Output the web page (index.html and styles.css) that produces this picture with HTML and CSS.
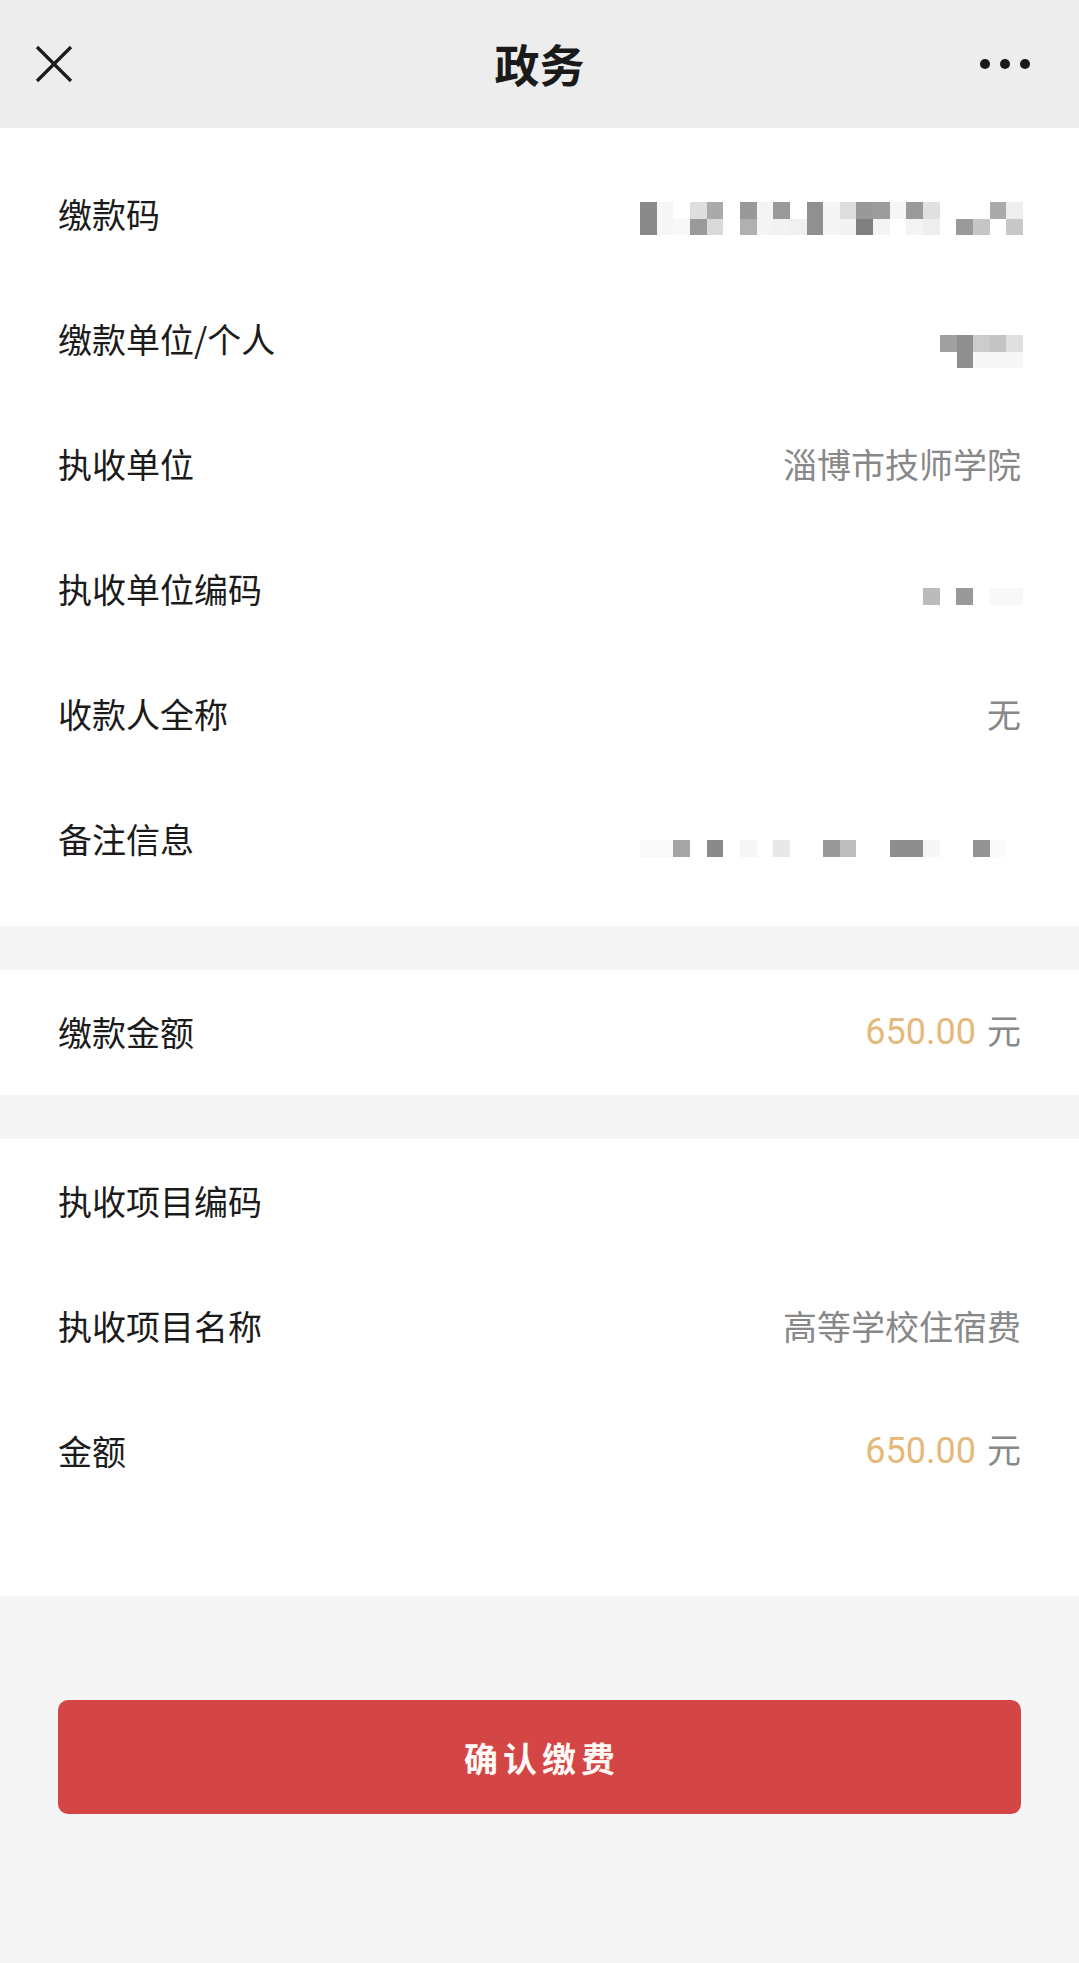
FILE: index.html
```html
<!DOCTYPE html>
<html lang="zh-CN">
<head>
	<meta charset="UTF-8">
	<title>政务</title>
<link rel="stylesheet" href="styles.css">
</head>
<body>
	<div id="page">
		<div class="topbar">
			<svg class="close" width="38" height="38" viewBox="0 0 38 38">
				<path d="M2 2 L36 36 M36 2 L2 36" stroke="#1a1a1a" stroke-width="3.2" fill="none"/>
			</svg>
			<div class="title">政务</div>
			<svg class="more" width="64" height="20" viewBox="0 0 64 20">
				<circle cx="5" cy="10" r="5" fill="#1a1a1a"/>
				<circle cx="25" cy="10" r="5" fill="#1a1a1a"/>
				<circle cx="45" cy="10" r="5" fill="#1a1a1a"/>
			</svg>
		</div>

		<div class="group group-info">
			<div class="row">
				<span class="label">缴款码</span>
				<svg class="mask mask-code" width="383" height="33" viewBox="0 0 23 2" preserveAspectRatio="none" shape-rendering="crispEdges">
					<rect x="0" y="0" width="1" height="2" fill="#8a8a8a"/>
					<rect x="1" y="0" width="1" height="2" fill="#f6f6f6"/>
					<rect x="2" y="1" width="1" height="1" fill="#f8f8f8"/>
					<rect x="3" y="0" width="1" height="1" fill="#dedede"/>
					<rect x="3" y="1" width="1" height="1" fill="#9a9a9a"/>
					<rect x="4" y="0" width="1" height="1" fill="#aaaaaa"/>
					<rect x="4" y="1" width="1" height="1" fill="#dadada"/>
					<rect x="6" y="0" width="1" height="1" fill="#999999"/>
					<rect x="6" y="1" width="1" height="1" fill="#b0b0b0"/>
					<rect x="7" y="0" width="1" height="2" fill="#f4f4f4"/>
					<rect x="8" y="0" width="1" height="1" fill="#9a9a9a"/>
					<rect x="8" y="1" width="1" height="1" fill="#f2f2f2"/>
					<rect x="9" y="1" width="1" height="1" fill="#f0f0f0"/>
					<rect x="10" y="0" width="1" height="2" fill="#909090"/>
					<rect x="11" y="0" width="1" height="2" fill="#f5f5f5"/>
					<rect x="12" y="0" width="1" height="1" fill="#dddddd"/>
					<rect x="12" y="1" width="1" height="1" fill="#f3f3f3"/>
					<rect x="13" y="0" width="1" height="1" fill="#999999"/>
					<rect x="13" y="1" width="1" height="1" fill="#808080"/>
					<rect x="14" y="0" width="1" height="1" fill="#9c9c9c"/>
					<rect x="14" y="1" width="1" height="1" fill="#f4f4f4"/>
					<rect x="15" y="0" width="1" height="1" fill="#f6f6f6"/>
					<rect x="16" y="0" width="1" height="1" fill="#9a9a9a"/>
					<rect x="16" y="1" width="1" height="1" fill="#f4f4f4"/>
					<rect x="17" y="0" width="1" height="1" fill="#e0e0e0"/>
					<rect x="17" y="1" width="1" height="1" fill="#eeeeee"/>
					<rect x="19" y="1" width="1" height="1" fill="#9a9a9a"/>
					<rect x="20" y="1" width="1" height="1" fill="#c6c6c6"/>
					<rect x="21" y="0" width="1" height="1" fill="#aaaaaa"/>
					<rect x="22" y="0" width="1" height="1" fill="#eeeeee"/>
					<rect x="22" y="1" width="1" height="1" fill="#c8c8c8"/>
				</svg>
			</div>
			<div class="row">
				<span class="label">缴款单位/个人</span>
				<svg class="mask mask-payer" width="83" height="33" viewBox="0 0 5 2" preserveAspectRatio="none" shape-rendering="crispEdges">
					<rect x="0" y="0" width="1" height="1" fill="#a0a0a0"/>
					<rect x="1" y="0" width="1" height="2" fill="#8f8f8f"/>
					<rect x="2" y="0" width="1" height="1" fill="#cccccc"/>
					<rect x="3" y="0" width="1" height="1" fill="#c4c4c4"/>
					<rect x="4" y="0" width="1" height="1" fill="#e0e0e0"/>
					<rect x="2" y="1" width="3" height="1" fill="#f7f7f7"/>
				</svg>
			</div>
			<div class="row">
				<span class="label">执收单位</span>
				<span class="value">淄博市技师学院</span>
			</div>
			<div class="row">
				<span class="label">执收单位编码</span>
				<svg class="mask mask-unit" width="100" height="17" viewBox="0 0 6 1" preserveAspectRatio="none" shape-rendering="crispEdges">
					<rect x="0" y="0" width="1" height="1" fill="#bbbbbb"/>
					<rect x="2" y="0" width="1" height="1" fill="#999999"/>
					<rect x="4" y="0" width="2" height="1" fill="#f8f8f8"/>
				</svg>
			</div>
			<div class="row">
				<span class="label">收款人全称</span>
				<span class="value">无</span>
			</div>
			<div class="row">
				<span class="label">备注信息</span>
				<svg class="mask mask-note" width="383" height="17" viewBox="0 0 23 1" preserveAspectRatio="none" shape-rendering="crispEdges">
					<rect x="0" y="0" width="2" height="1" fill="#f9f9f9"/>
					<rect x="2" y="0" width="1" height="1" fill="#a5a5a5"/>
					<rect x="4" y="0" width="1" height="1" fill="#8a8a8a"/>
					<rect x="6" y="0" width="1" height="1" fill="#f6f6f6"/>
					<rect x="8" y="0" width="1" height="1" fill="#e8e8e8"/>
					<rect x="11" y="0" width="1" height="1" fill="#999999"/>
					<rect x="12" y="0" width="1" height="1" fill="#bdbdbd"/>
					<rect x="15" y="0" width="2" height="1" fill="#8e8e8e"/>
					<rect x="17" y="0" width="1" height="1" fill="#f7f7f7"/>
					<rect x="20" y="0" width="1" height="1" fill="#939393"/>
					<rect x="21" y="0" width="1" height="1" fill="#fafafa"/>
				</svg>
			</div>
		</div>

		<div class="group">
			<div class="row">
				<span class="label">缴款金额</span>
				<span class="value"><span class="money">650.00</span><span class="unit">元</span></span>
			</div>
		</div>

		<div class="group group-items">
			<div class="row">
				<span class="label">执收项目编码</span>
				<span class="value"></span>
			</div>
			<div class="row">
				<span class="label">执收项目名称</span>
				<span class="value">高等学校住宿费</span>
			</div>
			<div class="row">
				<span class="label">金额</span>
				<span class="value"><span class="money">650.00</span><span class="unit">元</span></span>
			</div>
		</div>

		<div class="action">
			<a href="javascript:;" class="btn-pay">确认缴费</a>
		</div>
	</div>
</body>
</html>
```

FILE: styles.css
```css
* {
	margin: 0;
	padding: 0;
	box-sizing: border-box;
}
body {
	background: #f5f5f5;
	font-family: "Noto Sans CJK SC", "Noto Sans", sans-serif;
	color: #1b1b1b;
}
#page {
	width: 1079px;
	min-height: 1963px;
	background: #f5f5f5;
}
.topbar {
	height: 128px;
	background: #ededed;
	display: grid;
	grid-template-columns: 1fr auto 1fr;
	align-items: center;
	padding: 0 35px;
}
.close {
	display: block;
}
.title {
	font-size: 45px;
	font-weight: 700;
	color: #1a1a1a;
	line-height: 1;
	padding-bottom: 2px;
}
.more {
	display: block;
	justify-self: end;
}
.group {
	background: #fff;
	margin-bottom: 44px;
}
.group-info {
	padding: 24px 0;
}
.group-items {
	padding-bottom: 82px;
	margin-bottom: 0;
}
.row {
	height: 125px;
	padding: 0 58px;
	display: flex;
	justify-content: space-between;
	align-items: center;
}
.label {
	font-size: 34px;
	line-height: 1.2;
}
.value {
	font-size: 34px;
	line-height: 1.2;
	color: #888;
	display: flex;
	align-items: baseline;
}
.money {
	font-family: Roboto, "Noto Sans", sans-serif;
	font-size: 36px;
	color: #e4ba7c;
}
.unit {
	margin-left: 11px;
	color: #888;
}
.mask {
	display: block;
	margin-right: -2px;
}
.mask-code {
	margin-top: 8px;
}
.mask-payer {
	margin-top: 24px;
}
.mask-unit {
	margin-top: 14px;
}
.mask-note {
	margin-top: 18px;
}
.action {
	padding: 104px 58px 0;
}
.btn-pay {
	display: flex;
	align-items: center;
	justify-content: center;
	height: 114px;
	border-radius: 10px;
	background: #d44646;
	color: #fff8f4;
	font-size: 34px;
	font-weight: 700;
	letter-spacing: 5px;
	text-decoration: none;
	padding-left: 5px;
}
```
